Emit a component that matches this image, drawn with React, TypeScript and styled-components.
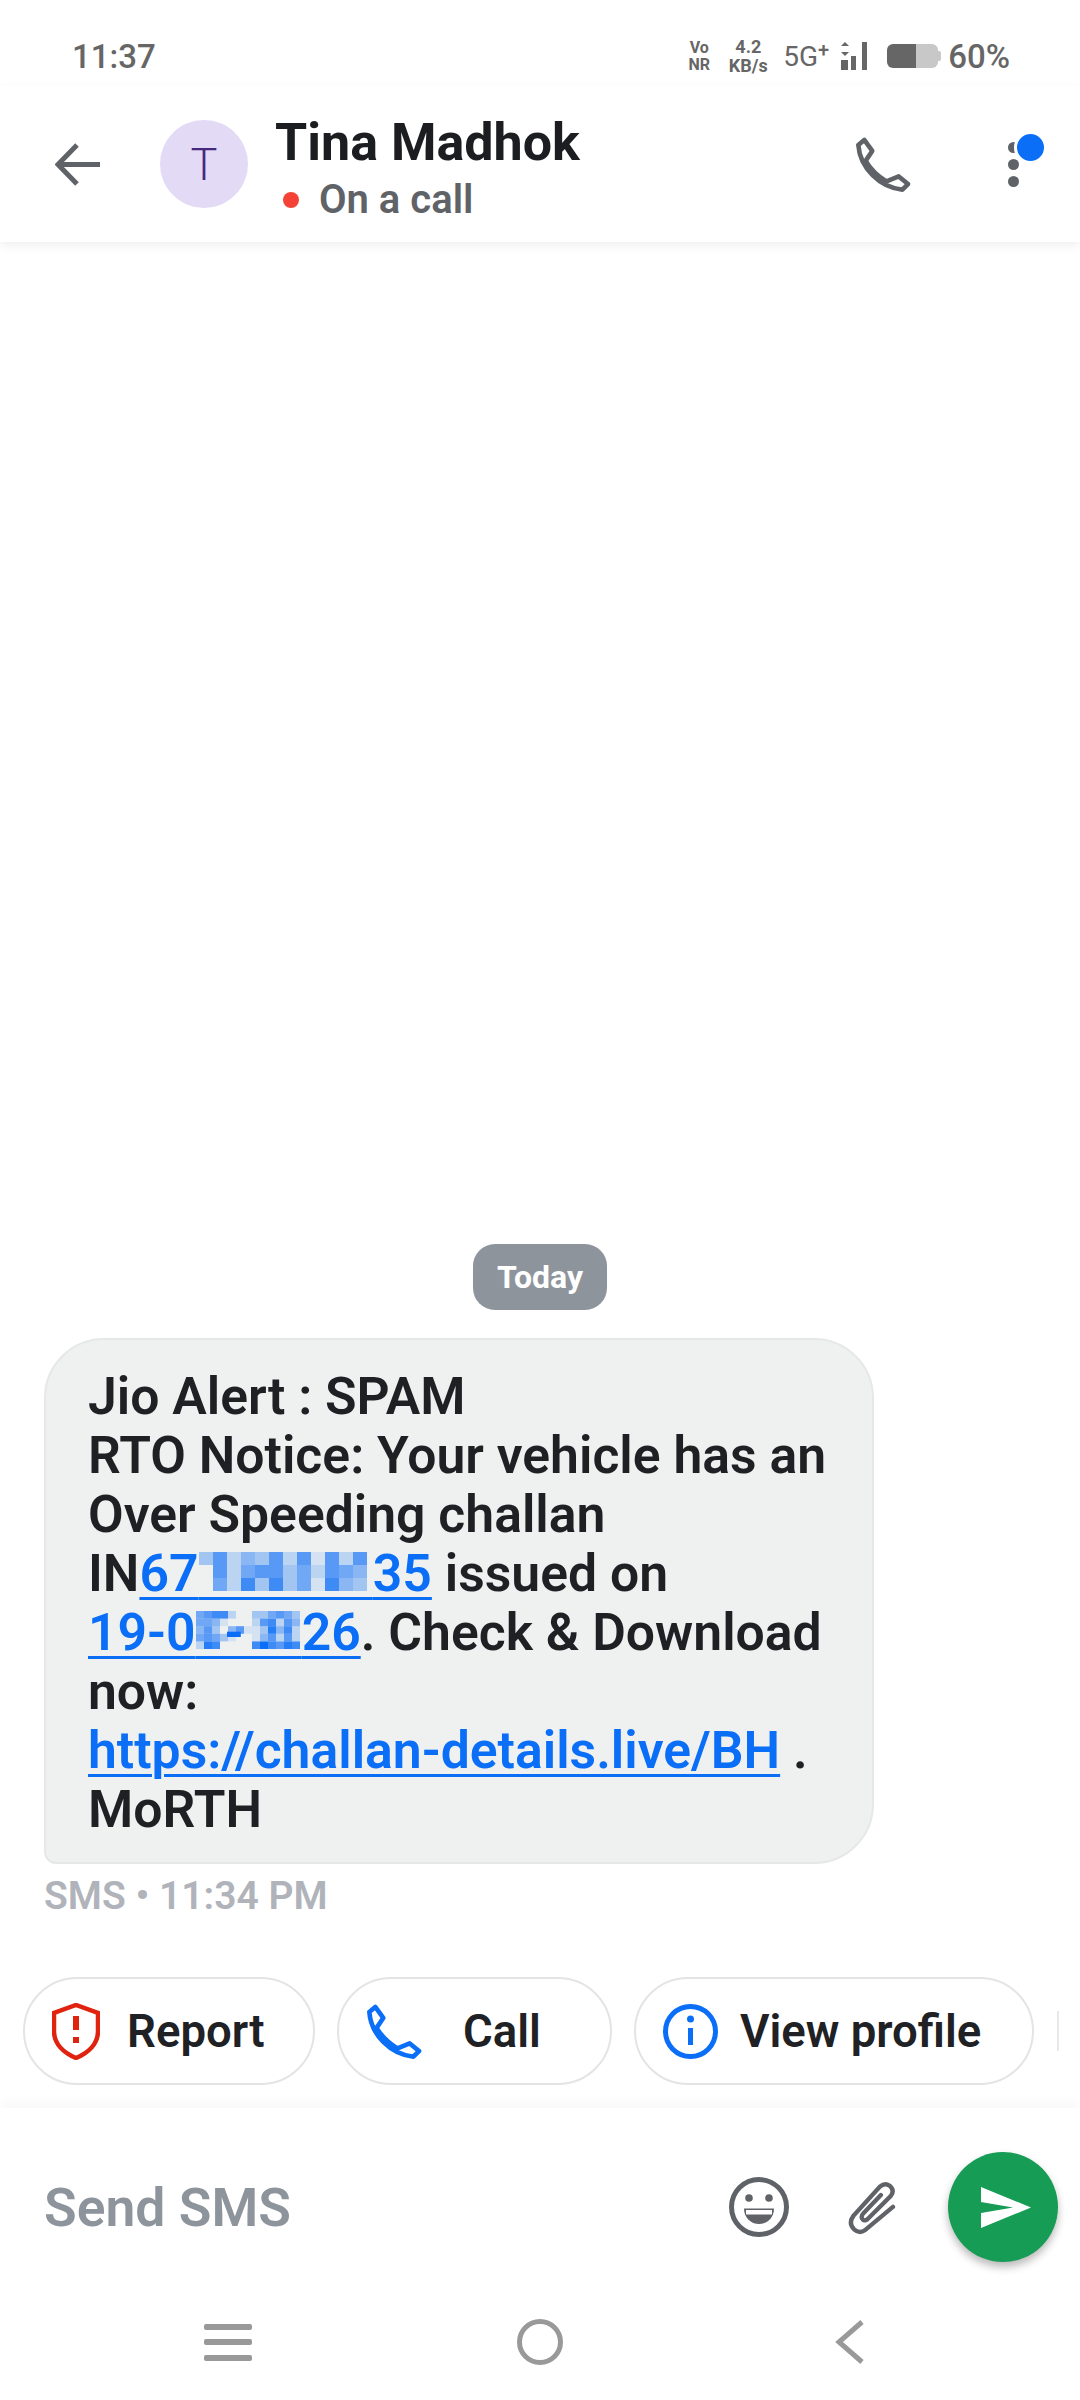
import React from "react";
import styled, { createGlobalStyle } from "styled-components";

const GlobalStyle = createGlobalStyle`
  html, body {
    margin: 0;
    padding: 0;
    background: #fff;
  }
  * {
    box-sizing: border-box;
  }
`;

const BLUE = "#0b6ef7";
const GREY = "#5f6368";

const Screen = styled.div`
  width: 1080px;
  height: 2400px;
  display: flex;
  flex-direction: column;
  background: #fff;
  overflow: hidden;
  font-family: Roboto, "Liberation Sans", sans-serif;
`;

/* status bar */
const StatusBar = styled.div`
  height: 86px;
  flex: none;
  display: flex;
  align-items: center;
  padding: 26px 70px 0 72px;
  color: #666;
`;

const Clock = styled.span`
  font-size: 33px;
  font-weight: 500;
  flex: 1;
`;

const StatusIcons = styled.div`
  display: flex;
  align-items: center;
`;

const StackedLabel = styled.div<{ $size: number; $width: number; $gap: number }>`
  width: ${(p) => p.$width}px;
  font-size: ${(p) => p.$size}px;
  font-weight: 700;
  line-height: ${(p) => p.$size + 1}px;
  text-align: center;
  margin-right: ${(p) => p.$gap}px;
`;

const NetworkLabel = styled.span`
  font-size: 28px;
  margin-right: 9px;
  sup {
    font-size: 20px;
    line-height: 0;
    font-weight: 500;
    vertical-align: 9px;
  }
`;

const Battery = styled.div`
  width: 51px;
  height: 24px;
  margin: 0 10px 0 17px;
  position: relative;
  border-radius: 6px;
  background: linear-gradient(to right, #666 57%, #c8c8c8 57%);
  &::after {
    content: "";
    position: absolute;
    right: -3px;
    top: 7px;
    width: 3px;
    height: 10px;
    border-radius: 0 2px 2px 0;
    background: #c8c8c8;
  }
`;

const BatteryLevel = styled.span`
  font-size: 33px;
  font-weight: 500;
`;

/* conversation header */
const Header = styled.header`
  height: 156px;
  flex: none;
  display: flex;
  align-items: center;
  padding: 0 61px 0 55px;
  background: #fff;
  box-shadow: 0 4px 10px rgba(0, 0, 0, 0.06);
  position: relative;
  z-index: 1;
`;

const Avatar = styled.div`
  width: 88px;
  height: 88px;
  margin: 0 27px 0 60px;
  border-radius: 50%;
  background: #e3daf5;
  color: #46287f;
  display: flex;
  align-items: center;
  justify-content: center;
  font-size: 45px;
  font-weight: 300;
`;

const Contact = styled.div`
  flex: 1;
  display: flex;
  flex-direction: column;
  margin-top: 7px;
`;

const ContactName = styled.div`
  font-size: 52px;
  font-weight: 700;
  line-height: 60px;
  color: #1c1d20;
`;

const Presence = styled.div`
  display: flex;
  align-items: center;
  margin: 4px 0 0 8px;
  font-size: 40px;
  font-weight: 600;
  line-height: 46px;
  color: ${GREY};
`;

const PresenceDot = styled.span`
  width: 16px;
  height: 16px;
  margin-right: 20px;
  border-radius: 50%;
  background: #f44336;
`;

const Menu = styled.div`
  position: relative;
  width: 11px;
  height: 45px;
  margin-left: 96px;
  display: flex;
  flex-direction: column;
  justify-content: space-between;
`;

const MenuDot = styled.span`
  width: 11px;
  height: 11px;
  flex: none;
  border-radius: 50%;
  background: ${GREY};
`;

const MenuBadge = styled.span`
  position: absolute;
  top: -11px;
  left: 6px;
  width: 33px;
  height: 33px;
  border: 3px solid #fff;
  border-radius: 50%;
  background: ${BLUE};
`;

/* messages */
const Thread = styled.main`
  flex: 1;
  display: flex;
  flex-direction: column;
  justify-content: flex-end;
  padding: 0 0 0 44px;
`;

const DateChip = styled.div`
  align-self: center;
  margin: 0 0 28px -44px;
  width: 134px;
  height: 66px;
  border-radius: 22px;
  background: #8e949c;
  color: #fff;
  font-size: 32px;
  font-weight: 700;
  display: flex;
  align-items: center;
  justify-content: center;
`;

const Bubble = styled.div`
  width: 830px;
  padding: 27px 0 23px 42px;
  background: #eff1f1;
  border: 2px solid #e6e8e8;
  border-radius: 60px 60px 60px 12px;
  font-size: 51.7px;
  font-weight: 600;
  line-height: 59px;
  color: #1f2023;
  white-space: nowrap;
`;

const MessageLink = styled.span`
  color: ${BLUE};
  text-decoration: underline;
  text-decoration-thickness: 3px;
  text-underline-offset: 6px;
`;

const Redacted = styled.span`
  position: relative;
`;

const PixelGrid = styled.svg<{ $top: number }>`
  position: absolute;
  left: 0;
  top: ${(p) => p.$top}px;
`;

const MessageMeta = styled.div`
  margin: 12px 0 61px;
  font-size: 39px;
  font-weight: 600;
  line-height: 40px;
  color: #b0b3ba;
`;

/* suggestion chips */
const ChipRow = styled.div`
  height: 131px;
  flex: none;
  display: flex;
  gap: 22px;
  padding-left: 23px;
  overflow: hidden;
`;

const Chip = styled.div<{ $width: number; $gap: number }>`
  width: ${(p) => p.$width}px;
  height: 108px;
  flex: none;
  display: flex;
  align-items: center;
  gap: ${(p) => p.$gap}px;
  padding-left: 27px;
  border: 2px solid #e4e4e4;
  border-radius: 54px;
  font-size: 45.5px;
  font-weight: 600;
  color: #202124;
`;

const ChipEdge = styled.div`
  width: 4px;
  height: 40px;
  flex: none;
  align-self: center;
  margin: -23px 0 0 1px;
  border-left: 2px solid #e8e8e8;
`;

/* composer */
const Composer = styled.div`
  height: 182px;
  flex: none;
  display: flex;
  align-items: center;
  padding: 16px 22px 0 44px;
  background: #fff;
  box-shadow: 0 -6px 12px rgba(0, 0, 0, 0.03);
  position: relative;
`;

const Placeholder = styled.span`
  flex: 1;
  font-size: 53.5px;
  font-weight: 600;
  color: #8d949c;
`;

const ComposerIcon = styled.svg<{ $left?: number }>`
  flex: none;
  display: block;
  margin-left: ${(p) => p.$left ?? 0}px;
`;

const SendButton = styled.div`
  width: 110px;
  height: 110px;
  margin-left: 50px;
  flex: none;
  border-radius: 50%;
  background: #169c55;
  box-shadow: 0 5px 8px rgba(0, 0, 0, 0.28);
  display: flex;
  align-items: center;
  justify-content: center;
  padding-left: 5px;
`;

/* navigation bar */
const NavBar = styled.nav`
  height: 110px;
  flex: none;
  display: flex;
  align-items: center;
  padding: 0 0 6px 204px;
`;

const HamburgerBars = styled.div`
  width: 48px;
  height: 37px;
  display: flex;
  flex-direction: column;
  justify-content: space-between;
  margin-right: 265px;
  span {
    height: 6px;
    border-radius: 2px;
    background: #999;
  }
`;

const HomeRing = styled.div`
  width: 46px;
  height: 46px;
  margin-right: 272px;
  border: 5px solid #999;
  border-radius: 50%;
`;

const PhoneGlyph = ({ color }: { color: string }) => (
  <svg width="57" height="57" viewBox="40 33 172 172" fill="none" stroke={color} strokeWidth="14" strokeLinejoin="round">
    <path d="M68 45L92 78 72 108C85 130 110 155 135 170L172 155 200 178 183 195C115 188 55 130 50 60Z" />
  </svg>
);

const PixelMask = ({ rows, w, h, top }: { rows: string[]; w: number; h: number; top: number }) => (
  <PixelGrid $top={top} width={rows[0].length * w} height={rows.length * h}>
    {rows.map((row, y) =>
      row.split("").map((v, x) => (
        <rect key={`${x}-${y}`} x={x * w} y={y * h} width={w} height={h} fill={BLUE} opacity={Number(v) / 9} />
      )),
    )}
  </PixelGrid>
);

const chassisMask = ["362436261626", "062566352654", "052737351743"];
const dateMask = [
  "5677200335653",
  "5541000267264",
  "4630461138472",
  "5653100146262",
  "2870000797687",
];

export default function App() {
  return (
    <Screen>
      <GlobalStyle />
      <StatusBar>
        <Clock>11:37</Clock>
        <StatusIcons>
          <StackedLabel $size={16} $width={26} $gap={15}>Vo<br />NR</StackedLabel>
          <StackedLabel $size={18} $width={42} $gap={14}>4.2<br />KB/s</StackedLabel>
          <NetworkLabel>5G<sup>+</sup></NetworkLabel>
          <svg width="32" height="28" viewBox="0 0 32 28" fill="#666">
            <path d="M3 4l4-4 4 4zM3 10h8l-4 4z" />
            <rect x="3" y="18" width="7" height="10" />
            <rect x="13" y="14" width="5" height="14" />
            <rect x="24" y="0" width="5" height="28" />
          </svg>
          <Battery />
          <BatteryLevel>60%</BatteryLevel>
        </StatusIcons>
      </StatusBar>

      <Header>
        <svg width="45" height="43" viewBox="0 0 45 43" fill="none" stroke={GREY} strokeWidth="5">
          <path d="M45 21.5H4M22 2L3 21.5 22 41" />
        </svg>
        <Avatar>T</Avatar>
        <Contact>
          <ContactName>Tina Madhok</ContactName>
          <Presence>
            <PresenceDot />
            On a call
          </Presence>
        </Contact>
        <PhoneGlyph color={GREY} />
        <Menu>
          <MenuDot />
          <MenuDot />
          <MenuDot />
          <MenuBadge />
        </Menu>
      </Header>

      <Thread>
        <DateChip>Today</DateChip>
        <Bubble>
          Jio Alert : SPAM
          <br />
          RTO Notice: Your vehicle has an
          <br />
          Over Speeding challan
          <br />
          IN
          <MessageLink>
            67
            <Redacted>
              {"\u2007".repeat(6)}
              <PixelMask rows={chassisMask} w={14} h={13} top={9} />
            </Redacted>
            35
          </MessageLink>{" "}
          issued on
          <br />
          <MessageLink>
            19-0
            <Redacted>
              {"\u2007-\u2007\u2007"}
              <PixelMask rows={dateMask} w={8} h={7.6} top={9} />
            </Redacted>
            26
          </MessageLink>
          . Check &amp; Download
          <br />
          now:
          <br />
          <MessageLink>https://challan-details.live/BH</MessageLink> .
          <br />
          MoRTH
        </Bubble>
        <MessageMeta>SMS • 11:34 PM</MessageMeta>
      </Thread>

      <ChipRow>
        <Chip $width={292} $gap={27}>
          <svg width="48" height="57" viewBox="0 0 48 57" fill="none" stroke="#e0230f" strokeWidth="4.5">
            <path d="M24 2L46 10V28C46 41 36 50 24 55 12 50 2 41 2 28V10Z" />
            <path d="M24 13V27M24 34V40" strokeWidth="6" />
          </svg>
          Report
        </Chip>
        <Chip $width={275} $gap={40}>
          <PhoneGlyph color={BLUE} />
          Call
        </Chip>
        <Chip $width={400} $gap={22}>
          <svg width="55" height="55" viewBox="0 0 55 55" fill="none" stroke={BLUE} strokeWidth="5">
            <circle cx="27.5" cy="27.5" r="25" />
            <path d="M27.5 24V41" />
            <circle cx="27.5" cy="15" r="3.5" fill={BLUE} stroke="none" />
          </svg>
          View profile
        </Chip>
        <ChipEdge />
      </ChipRow>

      <Composer>
        <Placeholder>Send SMS</Placeholder>
        <ComposerIcon width="60" height="60" viewBox="0 0 60 60">
          <circle cx="30" cy="30" r="27.5" fill="none" stroke={GREY} strokeWidth="5" />
          <circle cx="20" cy="21" r="3.8" fill={GREY} />
          <circle cx="40" cy="21" r="3.8" fill={GREY} />
          <path d="M15 31.5H45C45 41 38 47 30 47S15 41 15 31.5Z" fill={GREY} />
          <rect x="17" y="33" width="26" height="4.5" fill="#fff" />
        </ComposerIcon>
        <ComposerIcon
          $left={57}
          width="52"
          height="57"
          viewBox="380 40 155 170"
          fill="none"
          stroke={GREY}
          strokeWidth="13"
          strokeLinecap="round"
        >
          <path d="M520 123L436 193Q420 204 404 190 386 172 402 150L482 62Q496 50 510 60 526 74 514 90L444 160Q434 168 428 158 424 150 432 142L484 88" />
        </ComposerIcon>
        <SendButton>
          <svg width="50" height="41" viewBox="0 0 50 41" fill="#fff">
            <path d="M0 0L50 20.5 0 41V26L32 20.5 0 15Z" />
          </svg>
        </SendButton>
      </Composer>

      <NavBar>
        <HamburgerBars>
          <span />
          <span />
          <span />
        </HamburgerBars>
        <HomeRing />
        <svg width="30" height="44" viewBox="0 0 30 44" fill="none" stroke="#999" strokeWidth="5">
          <path d="M27 2L4 22 27 42" />
        </svg>
      </NavBar>
    </Screen>
  );
}
